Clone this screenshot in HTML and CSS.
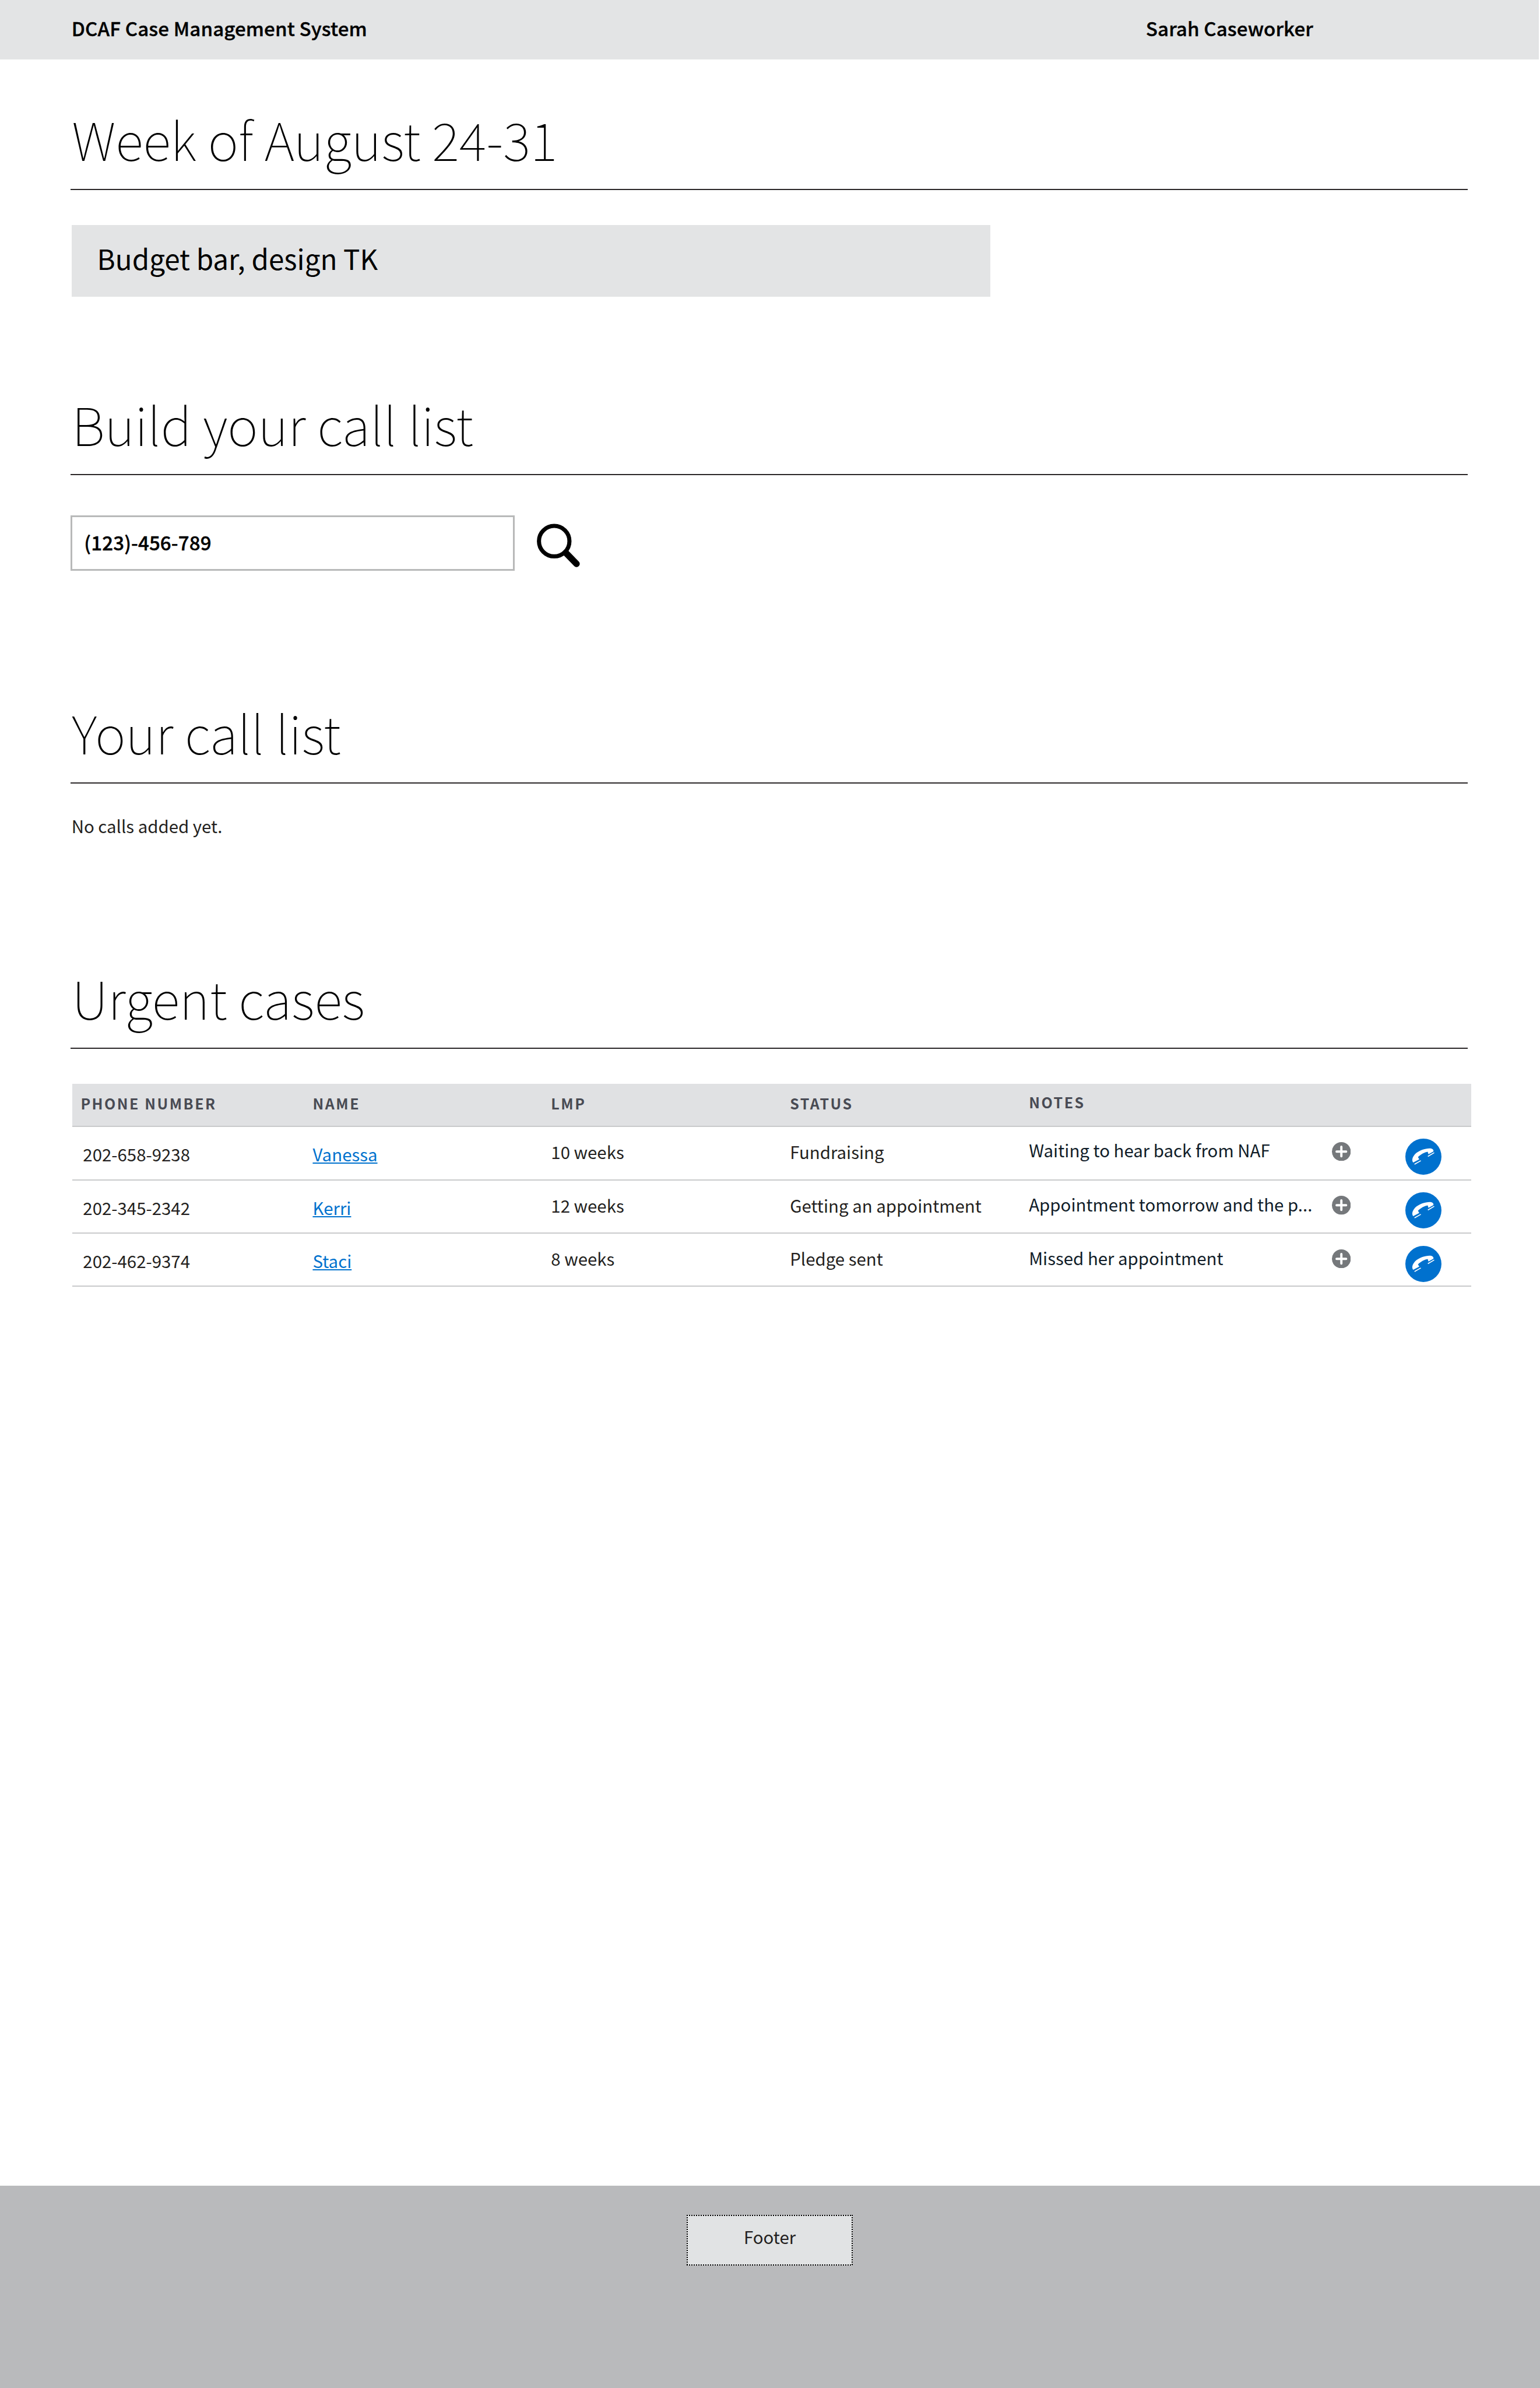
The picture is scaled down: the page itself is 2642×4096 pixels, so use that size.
FILE: index.html
```html
<!DOCTYPE html>
<html lang="en">
<head>
<meta charset="utf-8">
<title>DCAF Case Management System</title>
<link rel="stylesheet" href="styles.css">
</head>
<body>
<svg class="defs" aria-hidden="true">
  <symbol id="plus" viewBox="0 0 33 33">
    <circle cx="16.5" cy="16.5" r="16.5" fill="#75787b"/>
    <path d="M16.5 8.2V24.8M8.2 16.5H24.8" stroke="#fff" stroke-width="4" stroke-linecap="round"/>
  </symbol>
  <symbol id="call" viewBox="429 36 189 189">
    <circle cx="523.5" cy="130.5" r="94.5" fill="#0071ce"/>
    <path fill="#fff" d="M470 161C461 149 466 133 480 117C500 97 535 86 560 87C573 88 578 96 576 103L550 118L546 105C532 107 508 119 495 133L502 144Z"/>
    <path stroke="#fff" stroke-width="5" d="M477 170.500L510 151.500M547 129L580 109.500"/>
  </symbol>
</svg>
<header class="topbar">
  <div class="brand">DCAF Case Management System</div>
  <div class="user">Sarah Caseworker</div>
</header>
<main class="content">
  <section>
    <h1 class="title">Week of August 24-31</h1>
    <div class="budget">Budget bar, design TK</div>
  </section>
  <section>
    <h2 class="title">Build your call list</h2>
    <div class="search">
      <div class="search-field">(123)-456-789</div>
      <svg class="search-icon" viewBox="937 914 76 77" fill="none" stroke="#000">
        <circle cx="967.3" cy="944.7" r="26.6" stroke-width="7.200"/>
        <path d="M987.500 965L1006.300 984.300" stroke-width="11.300" stroke-linecap="round"/>
      </svg>
    </div>
  </section>
  <section>
    <h2 class="title">Your call list</h2>
    <p class="empty">No calls added yet.</p>
  </section>
  <section>
    <h2 class="title">Urgent cases</h2>
    <div class="table">
      <div class="row head">
        <div class="phone">PHONE NUMBER</div><div class="name">NAME</div><div class="lmp">LMP</div><div class="status">STATUS</div><div class="notes">NOTES</div>
      </div>
      <div class="row">
        <div class="phone">202-658-9238</div><div class="name"><a href="#">Vanessa</a></div><div class="lmp">10 weeks</div><div class="status">Fundraising</div><div class="notes">Waiting to hear back from NAF</div>
        <svg class="plus"><use href="#plus"/></svg><svg class="call"><use href="#call"/></svg>
      </div>
      <div class="row shifted">
        <div class="phone">202-345-2342</div><div class="name"><a href="#">Kerri</a></div><div class="lmp">12 weeks</div><div class="status">Getting an appointment</div><div class="notes">Appointment tomorrow and the p...</div>
        <svg class="plus"><use href="#plus"/></svg><svg class="call"><use href="#call"/></svg>
      </div>
      <div class="row shifted">
        <div class="phone">202-462-9374</div><div class="name"><a href="#">Staci</a></div><div class="lmp">8 weeks</div><div class="status">Pledge sent</div><div class="notes">Missed her appointment</div>
        <svg class="plus"><use href="#plus"/></svg><svg class="call"><use href="#call"/></svg>
      </div>
    </div>
  </section>
</main>
<footer class="footer">
  <div class="footer-box">Footer</div>
</footer>
</body>
</html>
```
FILE: styles.css
```css
* { box-sizing: border-box; }

html { font-size: 9.829px; }

body {
  margin: 0;
  height: 416.7rem;
  display: flex;
  flex-direction: column;
  background: #fff;
  color: #231f20;
  font-family: "Source Sans Pro", "Noto Sans CJK SC", sans-serif;
  font-size: 2.995rem;
  line-height: 4rem;
  overflow: hidden;
}

.defs { display: none; }

.topbar {
  display: grid;
  grid-template-columns: 187.5rem auto;
  height: 10.4rem;
  margin-right: .2rem;
  padding: 3rem 0 0 12.5rem;
  background: #e3e4e5;
  color: #000;
  font-size: 3.37rem;
  font-weight: 500;
  letter-spacing: .01rem;
  -webkit-text-stroke: .4px #000;
}

.content {
  flex: 1;
  display: grid;
  grid-template-rows: 49.74rem 53.83rem 46.3rem auto;
  padding: 8.8rem 12.02rem 0 12.33rem;
}

.title {
  width: 243.9rem;
  margin: 0;
  padding: 0 0 3.96rem .2rem;
  border-bottom: 2px solid #2b2728;
  color: #000;
  font-size: 9.09rem;
  font-weight: 100;
  line-height: 9.8rem;
  white-space: nowrap;
}

.budget {
  width: 160.4rem;
  height: 12.5rem;
  margin: 6.12rem 0 0 .17rem;
  padding: 3.75rem 0 0 4.45rem;
  background: #e3e4e5;
  color: #000;
  font-size: 4.84rem;
  line-height: 4rem;
}

.search {
  display: flex;
  gap: 3.9rem;
  margin-top: 7rem;
}

.search-field {
  width: 77.5rem;
  height: 9.75rem;
  padding: 2.48rem 0 0 2.05rem;
  border: 3.6px solid #b8b9b9;
  color: #000;
  font-size: 3.37rem;
  font-weight: 500;
  letter-spacing: .01rem;
  -webkit-text-stroke: .4px #000;
}

.search-icon {
  width: 7.6rem;
  height: 7.7rem;
  margin-top: 1.5rem;
}

.empty { margin: 5.37rem 0 0 .15rem; }

.table {
  width: 244.15rem;
  margin: 6.15rem 0 0 .3rem;
}

.row {
  display: grid;
  grid-template-columns: 41.95rem 41.6rem 41.7rem 41.72rem 52.88rem 12.8rem auto;
  align-items: start;
  height: 9.3rem;
  border-bottom: 2px solid #c9cacb;
  white-space: nowrap;
}

.row.head {
  height: 7.5rem;
  background: #e0e1e3;
  color: #494b54;
  font-size: 2.55rem;
  font-weight: 700;
  letter-spacing: .255rem;
}

.phone { padding: 2.76rem 0 0 1.85rem; }
.name { padding-top: 2.76rem; }
.lmp, .status { padding-top: 2.34rem; }
.notes { padding-top: 2.04rem; color: #101c28; }
.head > * { padding-top: 1.4rem; color: inherit; }
.head .phone { padding-left: 1.45rem; }
.head .notes { padding-top: 1.17rem; }
.shifted .notes { padding-top: 2.2rem; }

.name a {
  color: #0072ce;
  text-decoration-thickness: 2px;
  text-underline-offset: .25rem;
}

.plus { width: 3.3rem; height: 3.3rem; margin-top: 2.6rem; }
.call { width: 6.3rem; height: 6.3rem; margin-top: 2rem; }
.shifted .plus { margin-top: 2.7rem; }
.shifted .call { margin-top: 2.1rem; }

.footer {
  height: 35.3rem;
  padding: 5.1rem 0 0 119.9rem;
  background: #b9babc;
}

/* square-dotted outline, one gradient strip per edge */
.footer-box {
  --dots-x: repeating-linear-gradient(90deg, #000 0 2px, transparent 2px 4px);
  --dots-y: repeating-linear-gradient(#000 0 2px, transparent 2px 4px);
  width: 28.9rem;
  height: 8.9rem;
  padding: 1.8rem 0 0;
  background:
    var(--dots-x) top / 100% 2px no-repeat,
    var(--dots-x) bottom / 100% 2px no-repeat,
    var(--dots-y) left / 2px 100% no-repeat,
    var(--dots-y) right / 2px 100% no-repeat,
    #e1e3e4;
  text-align: center;
}
```
